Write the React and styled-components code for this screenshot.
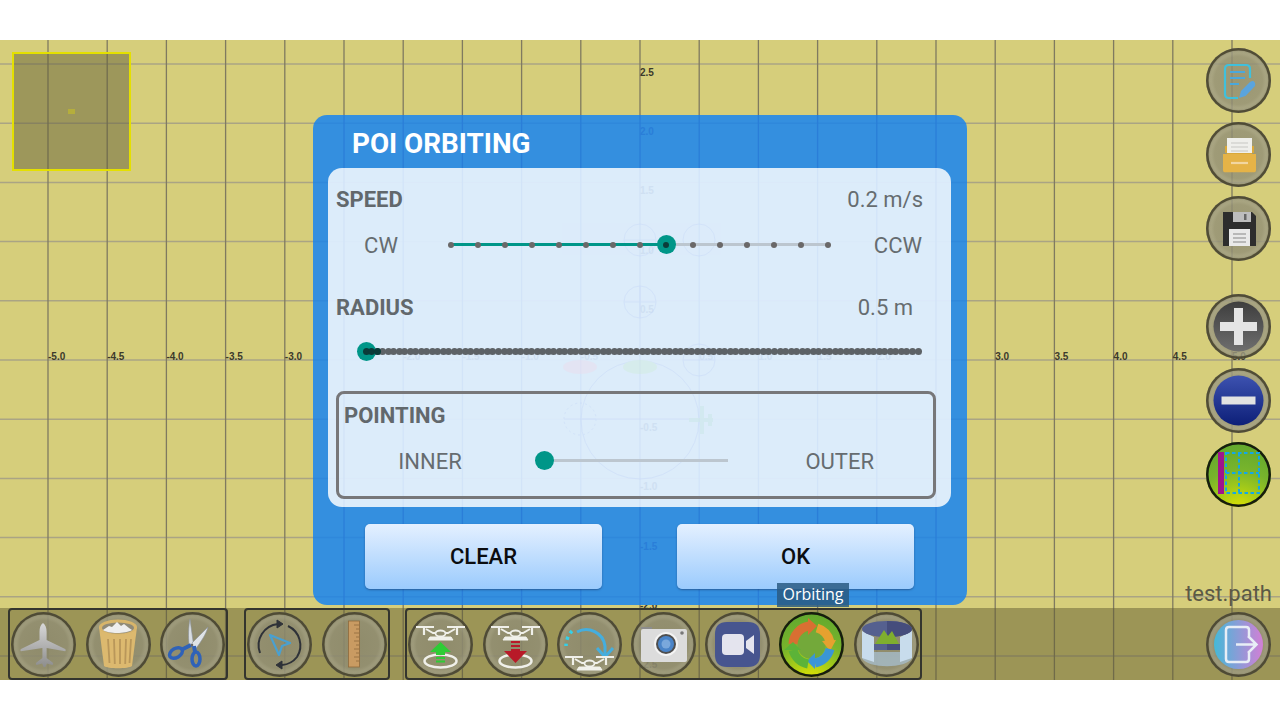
import React from 'react';
import styled, { createGlobalStyle } from 'styled-components';

const GlobalStyle = createGlobalStyle`
  html, body { margin: 0; padding: 0; background: #fff; }
  body { font-family: Roboto, "Liberation Sans", sans-serif; }
`;

const Screen = styled.div`
  width: 1280px;
  height: 720px;
  padding: 40px 0;
  box-sizing: border-box;
  overflow: hidden;
`;

const Canvas = styled.div`
  position: relative;
  width: 1280px;
  height: 640px;
  background: #d6ce7b;
  overflow: hidden;
`;

const MapLayer = styled.svg`
  position: absolute;
  left: ${(p) => p.$left || 0}px;
  top: ${(p) => p.$top || 0}px;
  opacity: ${(p) => p.$opacity || 1};
`;

const AxisText = styled.text`
  font-family: "Liberation Sans", Arial, sans-serif;
  font-size: 10px;
  font-weight: bold;
  fill: ${(p) => p.$fill};
`;

const MiniMap = styled.div`
  position: absolute;
  left: 12px;
  top: 12px;
  width: 119px;
  height: 119px;
  box-sizing: border-box;
  border: 2px solid #e4e000;
  background: rgba(100, 95, 60, 0.5);
  display: flex;
  align-items: center;
  justify-content: center;
`;

const MiniMarker = styled.div`
  width: 7px;
  height: 5px;
  background: #b5ae3c;
`;

/* ---------- round image buttons ---------- */

const RoundButton = styled.div`
  width: 65px;
  height: 65px;
  flex: none;
  border-radius: 50%;
  background: ${(p) =>
    p.$green
      ? 'radial-gradient(circle at 50% 108%, #e8e400 0, #b0d014 26%, #78b42c 55%, #5aa42e 100%)'
      : 'radial-gradient(circle at 50% 50%, rgba(140,137,112,0.8) 0, rgba(145,142,118,0.8) 52%, rgba(208,206,180,0.88) 90%)'};
  box-shadow: ${(p) =>
    p.$green
      ? 'inset 0 0 0 2.5px #171c0e'
      : 'inset 0 0 0 2.5px rgba(58,54,34,0.75), inset 0 0 2px 3px rgba(58,54,34,0.25)'};
  display: flex;

  svg {
    width: 65px;
    height: 65px;
    display: block;
  }
`;

const BottomBar = styled.div`
  position: absolute;
  left: 0;
  right: 0;
  bottom: 0;
  height: 72px;
  background: rgba(98, 92, 50, 0.5);
  display: flex;
  align-items: stretch;
  padding-left: 8px;
  box-sizing: border-box;
`;

const ToolGroup = styled.div`
  display: flex;
  align-items: center;
  gap: ${(p) => p.$gap}px;
  padding: 0 ${(p) => p.$pad}px;
  margin-left: ${(p) => p.$offset || 0}px;
  border: 2px solid #34352e;
  border-radius: 4px;
`;

const ExitSlot = styled.div`
  margin-left: auto;
  margin-right: 9px;
  display: flex;
  align-items: center;
`;

const FileName = styled.div`
  position: absolute;
  right: 8px;
  bottom: 73px;
  font-size: 22px;
  line-height: 26px;
  color: #5b5946;
`;

const SideRail = styled.div`
  position: absolute;
  top: 8px;
  right: 9px;
  display: flex;
  flex-direction: column;
  gap: 33px;
`;

const RailGroup = styled.div`
  display: flex;
  flex-direction: column;
  gap: 9px;
`;

/* ---------- dialog ---------- */

const Dialog = styled.div`
  position: absolute;
  left: 313px;
  top: 75px;
  width: 654px;
  height: 490px;
  box-sizing: border-box;
  border-radius: 14px;
  overflow: hidden;
  background: #348fdf;
  padding: 0 15px;
  display: flex;
  flex-direction: column;
`;

const DialogTitle = styled.div`
  position: relative;
  height: 53px;
  padding-left: 24px;
  font-size: 27.8px;
  font-weight: 700;
  line-height: 57px;
  color: #fff;
`;

const Panel = styled.div`
  position: relative;
  height: 339px;
  width: 623px;
  box-sizing: border-box;
  border-radius: 14px;
  overflow: hidden;
  background: #dcecfa;
`;

const PanelBody = styled.div`
  position: relative;
  padding: 17px 8px 0;
`;

const HeadRow = styled.div`
  display: flex;
  justify-content: space-between;
  height: 28px;
  align-items: center;
  padding-right: ${(p) => p.$right}px;
  margin-top: ${(p) => p.$top || 0}px;
`;

const SectionLabel = styled.div`
  font-size: 22px;
  font-weight: 700;
  color: #62686c;
`;

const ValueText = styled.div`
  font-size: 22px;
  color: #666c70;
`;

const SliderRow = styled.div`
  display: flex;
  align-items: center;
  height: 36px;
  margin-top: ${(p) => p.$top}px;
`;

const SideLabel = styled.div`
  font-size: 22px;
  color: #666c70;
  text-align: ${(p) => p.$align || 'center'};
  width: ${(p) => p.$width}px;
  flex: none;
`;

const SliderBase = styled.div`
  position: relative;
  height: 20px;
  flex: none;
  width: ${(p) => p.$width}px;
  margin-left: ${(p) => p.$left || 0}px;
`;

const Rail = styled.div`
  position: absolute;
  top: 8px;
  height: 3px;
  background: #bcc6cf;
`;

const RailFill = styled.div`
  position: absolute;
  top: 8px;
  height: 3px;
  background: #009688;
`;

const Tick = styled.div`
  position: absolute;
  top: ${(p) => (p.$packed ? 6 : 6.5)}px;
  width: ${(p) => (p.$packed ? 7 : 6)}px;
  height: ${(p) => (p.$packed ? 7 : 6)}px;
  margin-left: ${(p) => (p.$packed ? -3.5 : -3)}px;
  border-radius: 50%;
  background: ${(p) => p.$tone || '#6a6868'};
`;

const Thumb = styled.div`
  position: absolute;
  top: 0;
  width: 19px;
  height: 19px;
  margin-left: -9.5px;
  border-radius: 50%;
  background: #009688;
  display: flex;
  align-items: center;
  justify-content: center;
`;

const ThumbDot = styled.div`
  width: 6px;
  height: 6px;
  border-radius: 50%;
  background: #0b3c3a;
`;

const PointingBox = styled.div`
  margin-top: 21px;
  height: 108px;
  width: 600px;
  box-sizing: border-box;
  border: 3px solid #777779;
  border-radius: 8px;
  padding: 9px 5px 0;
`;

const ButtonRow = styled.div`
  position: relative;
  display: flex;
  gap: 75px;
  padding-left: 37px;
  margin-top: 17px;
`;

const ActionButton = styled.div`
  width: 237px;
  height: 65px;
  border-radius: 5px;
  background: linear-gradient(#e4f0ff, #9bcbfd);
  box-shadow: 0 1px 2px rgba(30, 60, 110, 0.6);
  display: flex;
  align-items: center;
  justify-content: center;
  font-size: 22px;
  font-weight: 500;
  color: #0b0d10;
`;

const Tooltip = styled.div`
  position: absolute;
  left: 777px;
  top: 543px;
  width: 72px;
  height: 24px;
  background: rgba(42, 90, 130, 0.85);
  color: #fff;
  font-family: "Open Sans", sans-serif;
  font-size: 16px;
  line-height: 23px;
  text-align: center;
`;

/* ---------- slider ---------- */

const Slider = ({ steps, value, width, left, dotted = true, innerDot = false, packed = false }) => {
  const range = width - 6;
  const at = (i) => 3 + (i / steps) * range;
  return (
    <SliderBase $width={width} $left={left}>
      <Rail style={{ left: at(0), width: range }} />
      <RailFill style={{ left: at(0), width: at(value) - at(0) }} />
      {dotted && Array.from({ length: steps + 1 }, (_, i) => (
        <Tick key={i} style={{ left: at(i) }} $packed={packed} $tone={packed ? '#5d6266' : undefined} />
      ))}
      <Thumb style={{ left: at(value) }}>{innerDot && <ThumbDot />}</Thumb>
      {packed && [0, 1, 2].map((i) => <Tick key={'o' + i} style={{ left: at(i) }} $packed $tone="#0b3c3a" />)}
    </SliderBase>
  );
};

/* ---------- map drawing ---------- */

const GRID = 59.2;
const COLS = Array.from({ length: 21 }, (_, i) => i - 10);
const ROWS = Array.from({ length: 11 }, (_, i) => i - 5);

// lines and axis numbers in canvas coordinates, shifted by the parent's offset
const GridLines = ({ dx = 0, dy = 0, hLine, vLine, hWidth = 1.5, vWidth = 1.3, textFill, xLabels = [], yLabels = [] }) => (
  <MapLayer width="1280" height="640" $left={-dx} $top={-dy}>
    {ROWS.map((k) => (
      <line key={k} x1="0" x2="1280" y1={320 + k * GRID} y2={320 + k * GRID} stroke={hLine} strokeWidth={hWidth} />
    ))}
    {COLS.map((k) => (
      <line key={k} x1={640 + k * GRID} x2={640 + k * GRID} y1="0" y2="640" stroke={vLine} strokeWidth={vWidth} />
    ))}
    {xLabels.map((k) => (
      <AxisText key={k} $fill={textFill} x={640 + k * GRID} y="320">{(k / 2).toFixed(1)}</AxisText>
    ))}
    {yLabels.map((k) => (
      <AxisText key={k} $fill={textFill} x="640" y={320 + k * GRID + 12}>{(-k / 2).toFixed(1)}</AxisText>
    ))}
  </MapLayer>
);

// the mission path that shines faintly through the panel
const GhostPath = () => (
  <MapLayer width="623" height="339" $opacity={0.45}>
    <g fill="none" stroke="#c6d8f8" strokeWidth="1">
      <circle cx="312" cy="252" r="59" />
      <circle cx="312" cy="134" r="16" />
      <circle cx="371" cy="192" r="16" />
      <circle cx="312" cy="72" r="16" />
      <circle cx="371" cy="72" r="16" />
      <circle cx="252" cy="251" r="16" strokeDasharray="2 3" />
      <path d="M252 251h119M312 118v32M296 134h32M355 192h32M296 72h32M236 251h32" />
    </g>
    <ellipse cx="252" cy="199" rx="17" ry="7" fill="#ecdcec" />
    <ellipse cx="312" cy="199" rx="17" ry="7" fill="#d0ecdc" />
    <path d="M374 238v28M361 252h24M382 246v12" stroke="#c8e6e4" strokeWidth="4" fill="none" />
  </MapLayer>
);

/* ---------- icons ---------- */

const PlaneIcon = () => (
  <svg viewBox="0 0 65 65">
    <defs>
      <linearGradient id="planeFill" x1="0" y1="0" x2="0" y2="1">
        <stop offset="0" stopColor="#d8d8d8" />
        <stop offset="1" stopColor="#8d8d8d" />
      </linearGradient>
    </defs>
    <path d="M32 11c2.400 1.500 3.600 5 3.600 9v8l18.500 9c.8.500.8 2 0 2.300l-18.500-3.300v10l6 4.500c.8.800.7 2.200-.2 2.500l-5.500-1.500-1.500 3.500h-1.800l-1.500-3.500-5.500 1.500c-.9-.3-1-1.700-.2-2.500l6-4.500v-10L10 39.300c-.8-.3-.8-1.800 0-2.300l18.500-9v-8c0-4 1.100-7.500 3.500-9z" fill="url(#planeFill)" />
  </svg>
);

const TrashIcon = () => (
  <svg viewBox="0 0 65 65">
    <path d="M13 15l5 39c3 3 25 3 28 0l5-39z" fill="#dcb96f" />
    <ellipse cx="32" cy="15" rx="19" ry="7.500" fill="#d8b56a" />
    <ellipse cx="32" cy="16" rx="16" ry="5.500" fill="#8f8a78" />
    <path d="M17 18l6-4 3 1 5-5 4 4 3-2 5 4 3 2c-6 4-24 4-29 0z" fill="#eeeeee" />
    <path d="M22 27l1.500 24M28 27l.8 25M34 27v25M40 27l-.8 25M45 27l-1.500 24" stroke="#b9975a" strokeWidth="1.800" />
  </svg>
);

const ScissorsIcon = () => (
  <svg viewBox="0 0 65 65">
    <path d="M30 7c-1.500 7-2 18-.8 27h4.500z" fill="#d8dde2" stroke="#8a9098" strokeWidth=".6" />
    <path d="M48 15L32 31l1 5 3 .5c5-7 10-14 12-21.500z" fill="#dfe3e6" stroke="#8a9098" strokeWidth=".6" />
    <ellipse cx="16" cy="41" rx="7" ry="4.500" transform="rotate(-30 16 41)" fill="none" stroke="#2f62b8" strokeWidth="3.500" />
    <ellipse cx="36" cy="47" rx="4" ry="7" fill="none" stroke="#2f62b8" strokeWidth="3.500" />
    <path d="M21 38l10-5M35 40l-1-6" stroke="#2f62b8" strokeWidth="4" />
    <circle cx="32" cy="33" r="1.300" fill="#666" />
  </svg>
);

const RotateIcon = () => (
  <svg viewBox="0 0 65 65">
    <path d="M13 41a21.500 21.500 0 0 1 18-29" fill="none" stroke="#2f3238" strokeWidth="2" />
    <path d="M30 8l6 4-6 4z" fill="#2f3238" stroke="#2f3238" />
    <path d="M41 14a21.500 21.500 0 0 1 9 31 21 21 0 0 1-15 8" fill="none" stroke="#2f3238" strokeWidth="2" />
    <path d="M35 49l-6 4 6 4z" fill="#2f3238" stroke="#2f3238" />
    <path d="M23 23l20 8-8 3-3 9z" fill="none" stroke="#4aa0d0" strokeWidth="2.200" strokeLinejoin="round" />
  </svg>
);

const RulerIcon = () => (
  <svg viewBox="0 0 65 65">
    <rect x="26.500" y="9" width="11" height="46" fill="#c99b62" stroke="#8f6a3c" strokeWidth=".8" />
    <path d="M37 13h-5M37 17h-3M37 21h-5M37 25h-3M37 29h-5M37 33h-3M37 37h-5M37 41h-3M37 45h-5M37 49h-3" stroke="#8f6a3c" strokeWidth=".8" />
  </svg>
);

const Drone = ({ y = 0 }) => (
  <g transform={`translate(0 ${y})`} stroke="#f0f0ea" fill="none">
    <path d="M8 15h18M39 15h18" strokeWidth="2.200" />
    <path d="M16 15v8M49 15v8" strokeWidth="2.200" />
    <path d="M18 17l7 4h15l7-4" strokeWidth="2" />
    <path d="M22 25h21l2 3H20z" fill="#f0f0ea" strokeWidth="1" />
    <ellipse cx="32.500" cy="21.500" rx="5" ry="3" fill="#8f8c70" strokeWidth="1.800" />
  </g>
);

const DroneUpIcon = () => (
  <svg viewBox="0 0 65 65">
    <Drone />
    <ellipse cx="32.500" cy="49" rx="16" ry="6.500" fill="none" stroke="#f0f0ea" strokeWidth="2.500" />
    <path d="M32.500 30L22 40h6v3h9v-3h6z" fill="#2ecc35" />
    <path d="M28 45h9v2h-9zM28 48.500h9v2h-9z" fill="#2ecc35" />
  </svg>
);

const DroneDownIcon = () => (
  <svg viewBox="0 0 65 65">
    <Drone />
    <ellipse cx="32.500" cy="49" rx="16" ry="6.500" fill="none" stroke="#f0f0ea" strokeWidth="2.500" />
    <path d="M28 29h9v2h-9zM28 33h9v2h-9z" fill="#b81a28" />
    <path d="M28 37h9v2h7L32.500 51 21 39h7z" fill="#b81a28" />
  </svg>
);

const LoopIcon = () => (
  <svg viewBox="0 0 65 65">
    <path d="M20 20a19 19 0 0 1 28 14v10" fill="none" stroke="#45aede" strokeWidth="3" />
    <path d="M40 36l8 9 8-9" fill="none" stroke="#45aede" strokeWidth="3" />
    <path d="M15 19c-4 4-6 10-6 15" fill="none" stroke="#35d0e8" strokeWidth="3.500" strokeDasharray="3 4" />
    <Drone y={30} />
  </svg>
);

const CameraIcon = () => (
  <svg viewBox="0 0 65 65">
    <rect x="10" y="17" width="46" height="33" rx="2" fill="#dcdcdc" />
    <path d="M10 17v-2h11v2z" fill="#8c8c8c" />
    <circle cx="35" cy="32" r="12" fill="#f4f4f4" />
    <circle cx="35" cy="32" r="10" fill="#4f4f4f" />
    <circle cx="35" cy="32" r="8" fill="#4a84c8" />
    <circle cx="35" cy="32" r="4.500" fill="#7aa8dc" />
    <circle cx="51" cy="21" r="1.800" fill="#777" />
  </svg>
);

const VideoIcon = () => (
  <svg viewBox="0 0 65 65">
    <path d="M22 10h21c8 0 12 4 12 12v21c0 8-4 12-12 12H22c-8 0-12-4-12-12V22c0-8 4-12 12-12z" fill="#47558f" />
    <rect x="17" y="22" width="22" height="21" rx="4" fill="#e4e4ee" />
    <path d="M41 29l8-6v19l-8-6z" fill="#e4e4ee" />
  </svg>
);

const OrbitIcon = () => (
  <svg viewBox="0 0 65 65">
    <circle cx="32.500" cy="33" r="14" fill="#73a93a" />
    <path d="M14 32a19 19 0 0 1 16-18" fill="none" stroke="#d96f32" strokeWidth="9" />
    <path d="M29 6l9 8-9 9z" fill="#d96f32" />
    <path d="M38 16a19 19 0 0 1 13 14" fill="none" stroke="#e5a12f" strokeWidth="9" />
    <path d="M43 29l14-1-6 11z" fill="#e5a12f" />
    <path d="M51 37a19 19 0 0 1-15 14" fill="none" stroke="#3a96d6" strokeWidth="9" />
    <path d="M36 41v16l-8-8z" fill="#3a96d6" />
    <path d="M29 52a19 19 0 0 1-15-14" fill="none" stroke="#5cb338" strokeWidth="9" />
    <path d="M5 38l9-8 8 8z" fill="#5cb338" />
  </svg>
);

const PanoramaIcon = () => (
  <svg viewBox="0 0 65 65">
    <path d="M8 46c5 11 45 11 50 0v-6H8z" fill="#a7bfd0" opacity=".75" />
    <path d="M8 19l12 6v25l-12-4zM58 19l-12 6v25l12-4z" fill="#c8dcec" />
    <ellipse cx="33" cy="17" rx="25" ry="8" fill="#55608f" />
    <path d="M33 9c14 0 25 3.500 25 8s-11 8-25 8z" fill="#454d7c" />
    <path d="M20 25h26v13H20z" fill="#8f8c70" />
    <path d="M20 32h13v6H20z" fill="#55608f" />
    <path d="M33 32h13v6H33z" fill="#454d7c" />
    <path d="M21 32l9-14 4 6 4-5 7 13z" fill="#7fae2e" />
  </svg>
);

const NotesIcon = () => (
  <svg viewBox="0 0 65 65">
    <path d="M44 30V21c0-2.500-1.500-4-4-4H23c-2.500 0-4 1.500-4 4v25c0 2.500 1.500 4 4 4h9" fill="none" stroke="#3fc0dc" strokeWidth="2.200" />
    <path d="M24 24h15M24 30h15M24 36h9" stroke="#4aa8dc" strokeWidth="2.200" />
    <path d="M33 50l2-7 9-9c2-1.500 3.500-1.500 4.500 0s1 3 0 4.500L39.500 48z" fill="#5ba4dc" />
  </svg>
);

const FolderIcon = () => (
  <svg viewBox="0 0 65 65">
    <rect x="21" y="16" width="25" height="18" fill="#efefeb" />
    <path d="M25 21h17M25 25h17M25 29h17" stroke="#c8c8c4" strokeWidth="1.200" />
    <path d="M19 24h2v10h25V24h2v7h-29z" fill="#d9a83a" />
    <path d="M17 32h33v16c0 1.500-.8 2.300-2.300 2.300H19.300c-1.500 0-2.300-.8-2.300-2.300z" fill="#e5b347" />
    <path d="M25 41h17" stroke="#f2d6a0" strokeWidth="2.200" />
  </svg>
);

const FloppyIcon = () => (
  <svg viewBox="0 0 65 65">
    <path d="M17 16h29l4 4v30H17z" fill="#2d2d2d" />
    <rect x="27" y="16" width="18" height="10" fill="#bdbdbd" />
    <rect x="38" y="18" width="2.500" height="6" fill="#666" />
    <rect x="23" y="33" width="21" height="17" fill="#e9e9e9" />
    <path d="M27 38h13M27 42h13M27 46h13" stroke="#888" strokeWidth="1.200" />
  </svg>
);

const DiscGradient = ({ id, from, to }) => (
  <defs>
    <linearGradient id={id} x1="0" y1="0" x2="0" y2="1">
      <stop offset="0" stopColor={from} />
      <stop offset="1" stopColor={to} />
    </linearGradient>
  </defs>
);

const PlusIcon = () => (
  <svg viewBox="0 0 65 65">
    <DiscGradient id="plusDisc" from="#3e3e3e" to="#6e6e6e" />
    <circle cx="32.500" cy="32.500" r="25" fill="url(#plusDisc)" />
    <path d="M28 14h9v14h14v9H37v14h-9V37H14v-9h14z" fill="#e4e4e4" />
  </svg>
);

const MinusIcon = () => (
  <svg viewBox="0 0 65 65">
    <DiscGradient id="minusDisc" from="#3d52b0" to="#0d1f78" />
    <circle cx="32.500" cy="32.500" r="25" fill="url(#minusDisc)" />
    <rect x="15.500" y="28.500" width="34" height="8" fill="#e2e2e2" />
  </svg>
);

const GridIcon = () => (
  <svg viewBox="0 0 65 65">
    <rect x="12" y="10" width="6" height="42" fill="#a0148c" />
    <path d="M20 11h33v40H20zM33 11v40M20 31h33" fill="none" stroke="#12a8e8" strokeWidth="2" strokeDasharray="3.500 2.500" />
  </svg>
);

const ExitIcon = () => (
  <svg viewBox="0 0 65 65">
    <defs>
      <linearGradient id="exitDisc" x1="0" y1="0" x2="1" y2="0">
        <stop offset="0" stopColor="#44b9d8" />
        <stop offset="1" stopColor="#d27fd6" />
      </linearGradient>
    </defs>
    <circle cx="32.500" cy="32.500" r="24.500" fill="url(#exitDisc)" />
    <path d="M43 24v-6c0-2-1-3-3-3H23c-2 0-3 1-3 3v29c0 2 1 3 3 3h17c2 0 3-1 3-3v-6" fill="none" stroke="#e8eef6" strokeWidth="2.500" />
    <path d="M30 32.500h20M42 24l8.500 8.500L42 41" fill="none" stroke="#e8eef6" strokeWidth="2.500" />
  </svg>
);

const App = () => (
  <Screen>
    <GlobalStyle />
    <Canvas>
      <GridLines
        hLine="#aaa484"
        vLine="#7f7a60"
        textFill="#3c3a2c"
        xLabels={[-10, -9, -8, -7, -6, 6, 7, 8, 9, 10]}
        yLabels={[-5, 4, 5]}
      />
      <MiniMap><MiniMarker /></MiniMap>

      <BottomBar>
        <ToolGroup $gap={9.5} $pad={1}>
          <RoundButton><PlaneIcon /></RoundButton>
          <RoundButton><TrashIcon /></RoundButton>
          <RoundButton><ScissorsIcon /></RoundButton>
        </ToolGroup>
        <ToolGroup $offset={16} $gap={10} $pad={1}>
          <RoundButton><RotateIcon /></RoundButton>
          <RoundButton><RulerIcon /></RoundButton>
        </ToolGroup>
        <ToolGroup $offset={15} $gap={9.2} $pad={1.4}>
          <RoundButton><DroneUpIcon /></RoundButton>
          <RoundButton><DroneDownIcon /></RoundButton>
          <RoundButton><LoopIcon /></RoundButton>
          <RoundButton><CameraIcon /></RoundButton>
          <RoundButton><VideoIcon /></RoundButton>
          <RoundButton $green><OrbitIcon /></RoundButton>
          <RoundButton><PanoramaIcon /></RoundButton>
        </ToolGroup>
        <ExitSlot>
          <RoundButton><ExitIcon /></RoundButton>
        </ExitSlot>
      </BottomBar>
      <FileName>test.path</FileName>

      <SideRail>
        <RailGroup>
          <RoundButton><NotesIcon /></RoundButton>
          <RoundButton><FolderIcon /></RoundButton>
          <RoundButton><FloppyIcon /></RoundButton>
        </RailGroup>
        <RailGroup>
          <RoundButton><PlusIcon /></RoundButton>
          <RoundButton><MinusIcon /></RoundButton>
          <RoundButton $green><GridIcon /></RoundButton>
        </RailGroup>
      </SideRail>

      <Dialog>
        <GridLines dx={313} dy={75} hLine="#2f88db" vLine="#2a7ed8" textFill="#2a7ed8" yLabels={[-4, 3]} />
        <DialogTitle>POI ORBITING</DialogTitle>
        <Panel>
          <GridLines
            dx={328}
            dy={128}
            hLine="#dae9f9"
            vLine="#d2e4f8"
            textFill="#cfe0f2"
            hWidth={1}
            xLabels={[-4, -3, -2, -1, 1, 2, 3, 4]}
            yLabels={[-3, -2, -1, 1, 2]}
          />
          <GhostPath />
          <PanelBody>
            <HeadRow $right={20}>
              <SectionLabel>SPEED</SectionLabel>
              <ValueText>0.2 m/s</ValueText>
            </HeadRow>
            <SliderRow $top={14}>
              <SideLabel $width={90}>CW</SideLabel>
              <Slider steps={14} value={8} width={383} left={22} innerDot />
              <SideLabel $width={91} $align="right">CCW</SideLabel>
            </SliderRow>
            <HeadRow $right={30} $top={30}>
              <SectionLabel>RADIUS</SectionLabel>
              <ValueText>0.5 m</ValueText>
            </HeadRow>
            <SliderRow $top={13}>
              <Slider steps={100} value={0} width={558} left={27} packed />
            </SliderRow>
            <PointingBox>
              <SectionLabel>POINTING</SectionLabel>
              <SliderRow $top={15}>
                <SideLabel $width={172}>INNER</SideLabel>
                <Slider steps={1} value={0} width={190} left={25} dotted={false} />
                <SideLabel $width={143} $align="right">OUTER</SideLabel>
              </SliderRow>
            </PointingBox>
          </PanelBody>
        </Panel>
        <ButtonRow>
          <ActionButton>CLEAR</ActionButton>
          <ActionButton>OK</ActionButton>
        </ButtonRow>
      </Dialog>

      <Tooltip>Orbiting</Tooltip>
    </Canvas>
  </Screen>
);

export default App;
